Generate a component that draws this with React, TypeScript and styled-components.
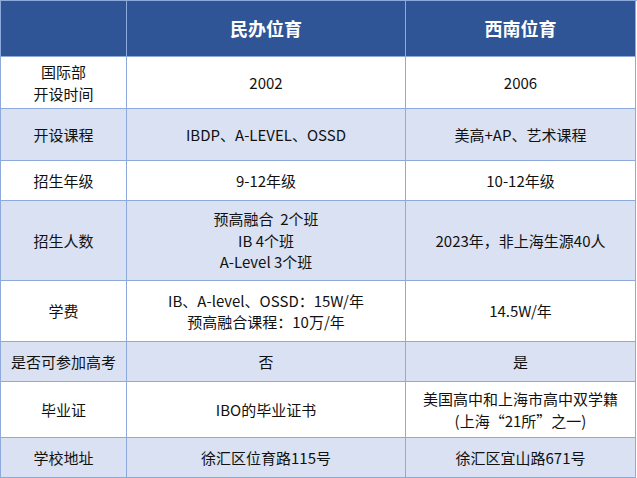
import React from "react";
import styled, { createGlobalStyle } from "styled-components";

const GlobalStyle = createGlobalStyle`
  html, body {
    margin: 0;
    padding: 0;
    background: #ffffff;
  }
  body {
    font-family: "Noto Sans CJK SC", "Noto Sans", sans-serif;
  }
`;

const Table = styled.div`
  display: grid;
  grid-template-columns: 126px 279px 230px;
  width: 636px;
  border-left: 1px solid #8ea9db;
  border-top: 1px solid #8ea9db;
`;

const Cell = styled.div<{ $h: number; $shade?: boolean; $head?: boolean }>`
  display: flex;
  flex-direction: column;
  align-items: center;
  justify-content: center;
  box-sizing: border-box;
  height: ${(p) => p.$h}px;
  border-right: 1px solid #8ea9db;
  border-bottom: 1px solid #8ea9db;
  background: ${(p) => (p.$head ? "#2f5597" : p.$shade ? "#d9e1f2" : "#ffffff")};
  color: ${(p) => (p.$head ? "#ffffff" : "#111111")};
  font-size: ${(p) => (p.$head ? "18px" : "15px")};
  font-weight: ${(p) => (p.$head ? 700 : 400)};
  line-height: 21.5px;
  text-align: center;
`;

const Line = styled.span`
  display: block;
  white-space: pre;
`;

type Row = { h: number; cells: string[][] };

const rows: Row[] = [
  { h: 52, cells: [["国际部", "开设时间"], ["2002"], ["2006"]] },
  { h: 52, cells: [["开设课程"], ["IBDP、A-LEVEL、OSSD"], ["美高+AP、艺术课程"]] },
  { h: 40, cells: [["招生年级"], ["9-12年级"], ["10-12年级"]] },
  {
    h: 80,
    cells: [
      ["招生人数"],
      ["预高融合  2个班", "IB 4个班", "A-Level 3个班"],
      ["2023年，非上海生源40人"],
    ],
  },
  {
    h: 61,
    cells: [["学费"], ["IB、A-level、OSSD：15W/年", "预高融合课程：10万/年"], ["14.5W/年"]],
  },
  { h: 40, cells: [["是否可参加高考"], ["否"], ["是"]] },
  {
    h: 56,
    cells: [["毕业证"], ["IBO的毕业证书"], ["美国高中和上海市高中双学籍", "(上海“21所”之一)"]],
  },
  { h: 40, cells: [["学校地址"], ["徐汇区位育路115号"], ["徐汇区宜山路671号"]] },
];

export default function App() {
  return (
    <>
      <GlobalStyle />
      <Table>
        <Cell $h={56} $head />
        <Cell $h={56} $head>民办位育</Cell>
        <Cell $h={56} $head>西南位育</Cell>
        {rows.map((row, i) =>
          row.cells.map((lines, j) => (
            <Cell key={`${i}-${j}`} $h={row.h} $shade={i % 2 === 1}>
              {lines.map((l) => (
                <Line key={l}>{l}</Line>
              ))}
            </Cell>
          ))
        )}
      </Table>
    </>
  );
}
